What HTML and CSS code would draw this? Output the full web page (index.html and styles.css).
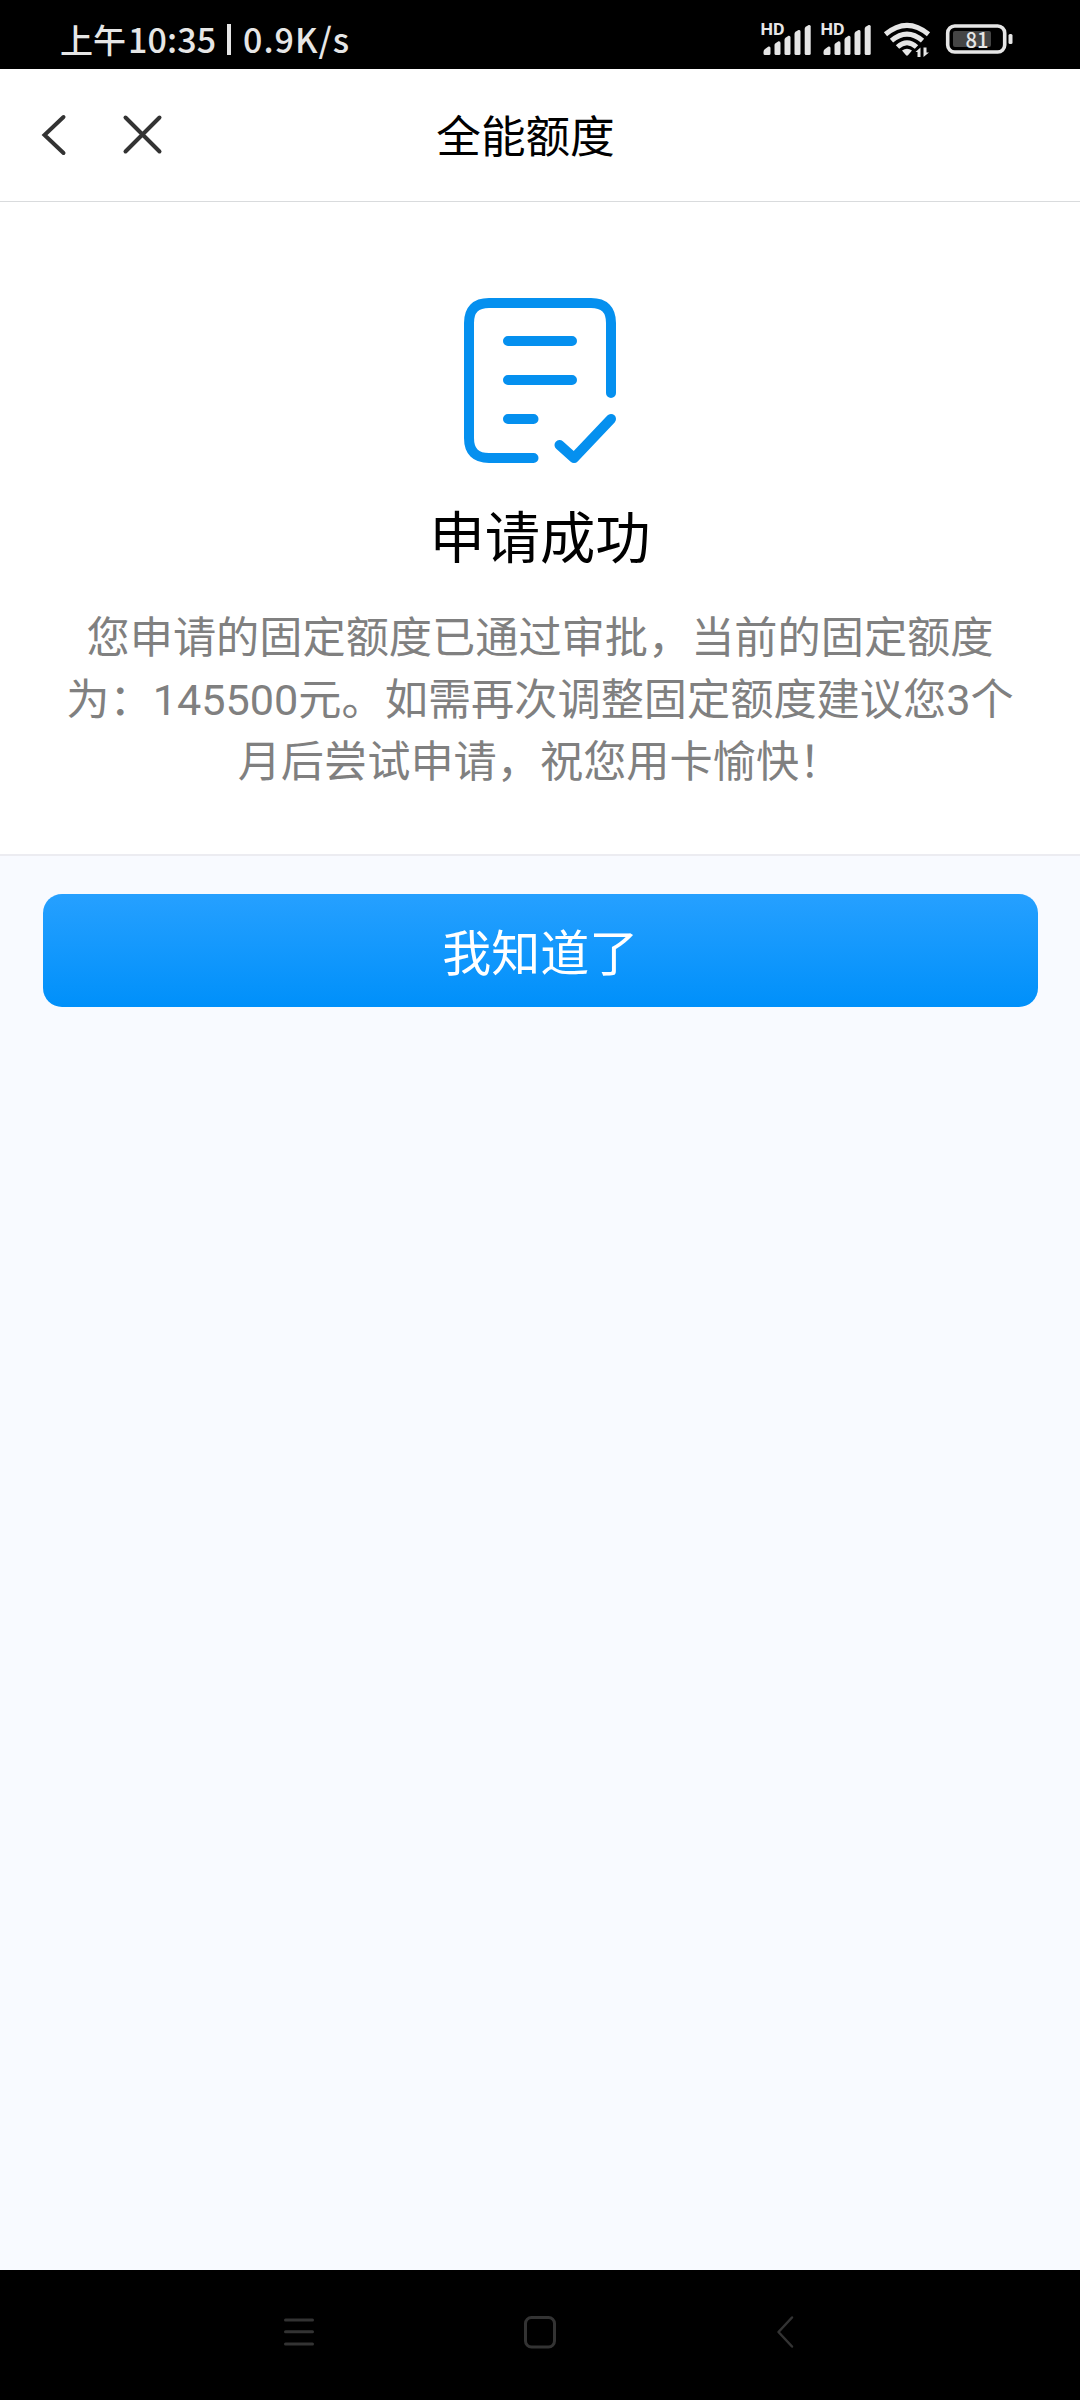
FILE: index.html
```html
<!DOCTYPE html>
<html lang="zh-CN">
<head>
<meta charset="utf-8">
<title>全能额度</title>
<link rel="stylesheet" href="styles.css">
</head>
<body>
<div class="screen">
  <div class="status">
    <div class="status-text"><span class="ampm">上午</span><span class="clock">10:35</span><span class="bar"></span><span class="speed">0.9K/s</span></div>
    <svg class="status-icons" width="260" height="40" viewBox="760 20 260 40">
      <g fill="#e6e6e6">
        <g id="signal">
          <text class="hd" x="760.5" y="35" textLength="24" lengthAdjust="spacingAndGlyphs">HD</text>
          <path d="M763.5 52Q763.5 50 765 49L768.5 46.5Q770.5 46 770.5 48V53.5Q770.5 55 769 55H765Q763.500 55 763.500 53.500Z"/>
          <path d="M774.500 45Q774.500 44 775.500 43.200L778.500 41.200Q780.500 41 780.500 43V53.500Q780.500 55 779 55H776Q774.500 55 774.500 53.500Z"/>
          <path d="M784.500 40Q784.500 38.500 785.500 37.800L788.500 35.800Q790.500 35.500 790.500 37.500V53.500Q790.500 55 789 55H786Q784.500 55 784.500 53.500Z"/>
          <path d="M794.500 34Q794.500 32.500 795.500 31.800L798.500 30Q800.500 29.500 800.500 31.500V53.500Q800.500 55 799 55H796Q794.500 55 794.500 53.500Z"/>
          <path d="M804.700 29Q804.700 27.500 805.700 26.800L808.700 25Q810.700 24.500 810.700 26.500V53.500Q810.700 55 809.200 55H806.200Q804.700 55 804.700 53.500Z"/>
        </g>
        <use href="#signal" x="60"/>
        <path d="M902 50.500Q907 47 912 50.500L908.200 55Q907 56.300 905.800 55Z"/>
        <path d="M917.500 57V52H915.500L920.500 47.500V57Z"/>
        <path d="M923.500 47.500V57L929 52.500H926.500V47.500Z"/>
        <rect x="1008.500" y="34" width="4" height="10" rx="1.500"/>
      </g>
      <g fill="none" stroke="#e6e6e6" stroke-width="5">
        <path d="M885.500 34.300Q907 16.500 928.500 34.300"/>
        <path d="M891.500 40.700Q907 27.500 922.500 40.700"/>
        <path d="M897.500 47Q907 38.500 916.500 47"/>
        <rect x="947.700" y="26" width="57" height="26" rx="7" stroke-width="3.600"/>
      </g>
      <rect x="953" y="31" width="38" height="16" rx="2" fill="#454545"/>
      <text class="level" x="965.500" y="47.500" textLength="23" lengthAdjust="spacingAndGlyphs">81</text>
    </svg>
  </div>

  <div class="header">
    <svg class="nav-icons" width="130" height="48" viewBox="38 111 130 48" fill="none" stroke="#333" stroke-width="4" stroke-linecap="round">
      <path d="M63.500 117L44.500 135L63.500 153"/>
      <path d="M125.500 117.500L159.500 151.500M159.500 117.500L125.500 151.500"/>
    </svg>
    <h1 class="title">全能额度</h1>
  </div>

  <div class="result">
    <svg class="doc" width="152" height="166" viewBox="464 298 152 166" fill="none" stroke="#0590ef" stroke-width="10" stroke-linecap="round" stroke-linejoin="round">
      <path d="M611 393V323Q611 303 591 303H489Q469 303 469 323V438Q469 458 489 458H533.500"/>
      <path d="M508 341H572M508 380H572M508 419H533.500M559.500 445L574 458L611 419"/>
    </svg>
    <h2 class="result-title">申请成功</h2>
    <p class="message">您申请的固定额度已通过审批，当前的固定额度<br>为：145500元。如需再次调整固定额度建议您3个<br>月后尝试申请，祝您用卡愉快！</p>
  </div>

  <div class="action"><button class="confirm">我知道了</button></div>

  <div class="navbar">
    <svg width="512" height="36" viewBox="283 2314 512 36" fill="none" stroke="#333" stroke-width="3" stroke-linecap="round" stroke-linejoin="round">
      <path d="M285.500 2320H312.500M285.500 2331.700H312.500M285.500 2344H312.500"/>
      <rect x="525.500" y="2317.500" width="29" height="29.500" rx="6"/>
      <path d="M792 2317.500L778.500 2332L792 2346.500" stroke-width="2.500"/>
    </svg>
  </div>
</div>
</body>
</html>
```
FILE: styles.css
```css
* { box-sizing: border-box; }
body { margin: 0; background: #f8faff; font-family: Roboto, "Noto Sans CJK SC", sans-serif; }
.screen { width: 1080px; height: 2400px; display: flex; flex-direction: column; }

.status { height: 69px; background: #000; color: #e6e6e6; display: flex; justify-content: space-between; padding: 20px 60px 0; }
.status-text { display: flex; height: 40px; font: 500 34px/38px "Noto Sans CJK SC", sans-serif; white-space: nowrap; }
.ampm { width: 68px; font-size: 33px; }
.clock { width: 98px; letter-spacing: 0.100px; }
.bar { width: 4px; height: 31px; margin: 4px 0 0 1px; background: #e6e6e6; }
.speed { margin-left: 12px; letter-spacing: 1px; }
.status-icons { display: block; }
.hd { font: 700 16px Roboto, sans-serif; }
.level { font: 500 21px "Noto Sans CJK SC", sans-serif; fill: #e6e6e6; }

.header { height: 133px; background: #fff; border-bottom: 1px solid #d9dbdd; display: grid; grid-template-columns: 398px 255px 1fr; align-items: center; }
.nav-icons { margin-left: 38px; }
.title { margin: 0; padding-top: 6px; font-size: 44.600px; font-weight: 400; line-height: 60px; text-align: center; color: #000; }

.result { height: 654px; background: #fff; border-bottom: 2px solid #ececf1; display: flex; flex-direction: column; align-items: center; padding-top: 96px; }
.result-title { margin: 38px 0 0; font-size: 55.300px; font-weight: 400; line-height: 76px; color: #000; }
.message { margin: 30px 0 0; font-size: 43.200px; line-height: 62px; color: #808080; text-align: center; white-space: nowrap; }

.action { flex: 1; padding: 38px 42.500px 0 43px; }
.confirm { display: block; width: 100%; height: 113px; padding: 8px 0 0; border: 0; border-radius: 19px; background: linear-gradient(#26a0ff, #0090fa); color: #fff; font: 400 49px/105px Roboto, "Noto Sans CJK SC", sans-serif; }

.navbar { height: 130px; background: #000; display: flex; justify-content: center; padding: 44px 2px 0 0; }
```
